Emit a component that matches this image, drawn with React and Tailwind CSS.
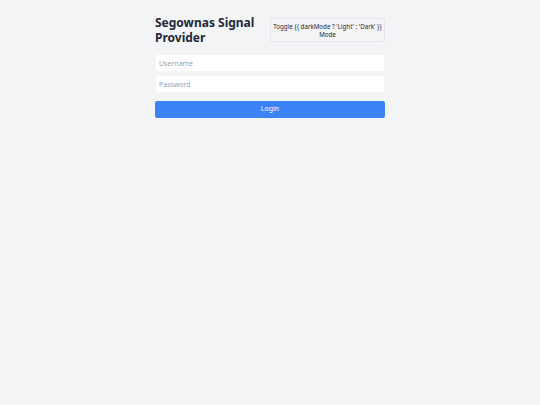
export default function App() {
  return (
    <div className="min-h-screen bg-[#f3f4f6] font-['Noto_Sans',sans-serif] text-[#1f2937]">
      <div className="mx-auto w-[230px] pt-[15px]">
        <div className="flex items-start justify-between">
          <h1 className="text-[12px] font-bold leading-[15px] text-[#1f2937]">
            Segownas Signal
            <br />
            Provider
          </h1>
          <button className="mt-[3px] w-[115px] rounded-[2px] border border-[#e5e7eb] bg-[#f3f4f6] px-[1px] pt-[4px] pb-[2px] text-center text-[6.2px] leading-[8px] text-[#1f2937]">
            Toggle {"{{ darkMode ? 'Light' : 'Dark' }}"} Mode
          </button>
        </div>
        <div className="mt-[9px] flex flex-col gap-[3px]">
          <input
            placeholder="Username"
            className="h-[18px] w-full rounded-[2px] border border-[#f3f4f6] bg-white px-[3px] text-[7px] outline-none placeholder:text-[#9ca3af]"
          />
          <input
            placeholder="Password"
            type="password"
            className="h-[18px] w-full rounded-[2px] border border-[#f3f4f6] bg-white px-[3px] text-[7px] outline-none placeholder:text-[#9ca3af]"
          />
        </div>
        <button className="mt-[6px] h-[17px] w-full rounded-[2px] bg-[#3b82f6] text-[7px] text-white">
          Login
        </button>
      </div>
    </div>
  );
}
